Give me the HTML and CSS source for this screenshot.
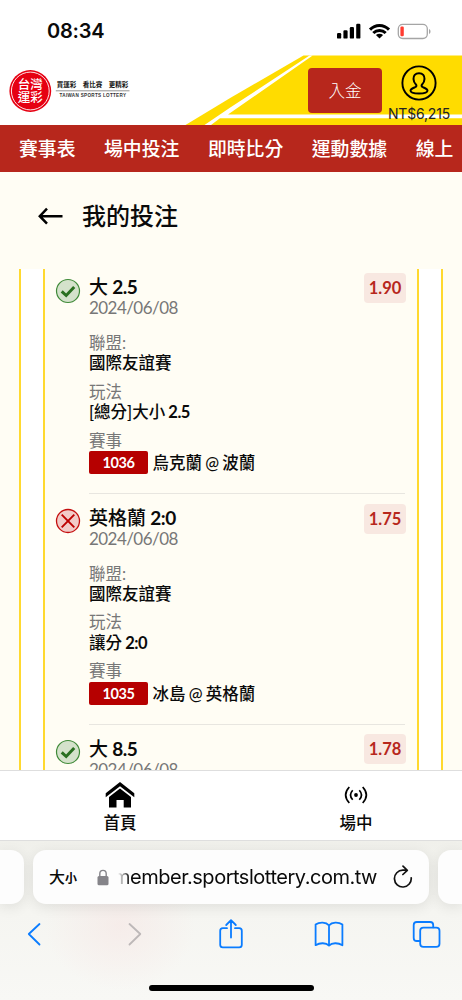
FILE: index.html
```html
<!DOCTYPE html>
<html lang="zh-Hant">
<head>
<meta charset="utf-8">
<meta name="viewport" content="width=device-width, initial-scale=1">
<title>我的投注</title>
<link rel="stylesheet" href="styles.css">
</head>
<body>
<div class="phone">
  <div class="status">
    <span class="time">08:34</span>
    <svg class="status-icons" width="96" height="20" viewBox="0 0 96 20">
      <g fill="#000">
        <rect x="0" y="11" width="4.2" height="5.6" rx="1.2"/>
        <rect x="6.4" y="8.2" width="4.2" height="8.4" rx="1.2"/>
        <rect x="12.8" y="5" width="4.2" height="11.6" rx="1.2"/>
        <rect x="19.2" y="1.8" width="4.2" height="14.8" rx="1.2"/>
      </g>
      <g fill="none" stroke="#000" stroke-width="3">
        <path d="M33 7.6C38.300 2 46.700 2 52 7.600"/>
        <path d="M36.300 11C39.800 7.500 45.200 7.500 48.700 11"/>
      </g>
      <path d="M42.500 16.600L38.900 13C41 11.300 44 11.300 46.100 13Z" fill="#000"/>
      <rect x="61.300" y="2.300" width="29" height="14.200" rx="4.400" fill="#fff" stroke="#a5a5a5" stroke-width="1.300"/>
      <rect x="63.400" y="4.500" width="3.400" height="9.800" rx="1.200" fill="#ff3b30"/>
      <path d="M92 7v5c2-.7 2-4.300 0-5z" fill="#a5a5a5"/>
    </svg>
  </div>

  <header class="header">
    <svg class="swoosh" width="462" height="70" viewBox="0 0 462 70">
      <path d="M303.500 .6H462V70H185.500L231 42.500Z" fill="#ffdc00"/>
      <path d="M309.500 .6H312.700L228 59.600H462V63.200H220L211 70H204.500L231 52Z" fill="#fff"/>
    </svg>
    <svg class="logo" width="122" height="44" viewBox="0 0 122 44">
      <circle cx="21.300" cy="22" r="20.900" fill="#e60012"/>
      <circle cx="21.300" cy="22" r="18.900" fill="none" stroke="#fff" stroke-width=".9"/>
      <g class="seal-text">
        <text x="8.800" y="20.300" textLength="25">台灣</text>
        <text x="8.800" y="32.900" textLength="25">運彩</text>
      </g>
      <g class="logo-slogan">
        <text x="47.800" y="18.400" textLength="19.500">買運彩</text>
        <text x="73.800" y="18.400" textLength="19.500">看比賽</text>
        <text x="99.800" y="18.400" textLength="19.500">更精彩</text>
      </g>
      <path d="M46.800 21.800H120.500" stroke="#777" stroke-width=".8"/>
      <text class="logo-en" x="50.500" y="28.400" textLength="66.500">TAIWAN SPORTS LOTTERY</text>
    </svg>
    <div class="deposit">入金</div>
    <div class="account">
      <svg width="36" height="36" viewBox="0 0 36 36" fill="none" stroke="#000">
        <circle cx="18" cy="18" r="16.600" stroke-width="1.900"/>
        <path d="M18 8.200C14.200 8.200 12.300 10.800 12.500 14C12.600 16.500 13.600 18.200 14.900 19.500C15.900 20.700 15.400 21.600 14 22.200C11.300 23.200 9.500 24.200 9.500 25.800C9.600 27.900 13.500 28.500 18 28.500S26.400 27.900 26.500 25.800C26.500 24.200 24.700 23.200 22 22.200C20.600 21.600 20.100 20.700 21.100 19.500C22.400 18.200 23.400 16.500 23.500 14C23.700 10.800 21.800 8.200 18 8.200Z" stroke-width="2"/>
      </svg>
      <span class="balance">NT$6,215</span>
    </div>
  </header>

  <nav class="nav"><span>賽事表</span><span>場中投注</span><span>即時比分</span><span>運動數據</span><span>線上</span></nav>

  <div class="page-title">
    <svg width="26" height="18" viewBox="0 0 26 18" fill="none" stroke="#000" stroke-width="2.500"><path d="M25.500 9.200H2.500M10 1.700L2.800 9.200L10 16.700"/></svg>
    <h1>我的投注</h1>
  </div>

  <main class="bets">
    <div class="ticket">
      <article class="bet">
        <svg class="mark" width="26" height="26" viewBox="0 0 26 26"><circle cx="13" cy="13" r="11.500" fill="#d4e2cb" stroke="#3f8a38" stroke-width="1.200"/><path d="M6.700 13.300L11.200 17.500L19.200 9" fill="none" stroke="#2a7021" stroke-width="3"/></svg>
        <div class="info">
          <h2>大 <b>2.5</b></h2><div class="date">2024/06/08</div>
          <dl><dt>聯盟:</dt><dd>國際友誼賽</dd></dl>
          <dl><dt>玩法</dt><dd>[總分]大小 <b>2.5</b></dd></dl>
          <dl><dt>賽事</dt><dd class="match"><span class="code">1036</span><span class="teams">烏克蘭 @ 波蘭</span></dd></dl>
        </div>
        <span class="odds">1.90</span>
      </article>
      <article class="bet">
        <svg class="mark" width="26" height="26" viewBox="0 0 26 26"><circle cx="13" cy="13" r="11.500" fill="#f2cbc8" stroke="#c40d0d" stroke-width="1.300"/><path d="M6.700 6.700L19.300 19.300M19.300 6.700L6.700 19.300" stroke="#bd0000" stroke-width="1.900"/></svg>
        <div class="info">
          <h2>英格蘭 <b>2:0</b></h2><div class="date">2024/06/08</div>
          <dl><dt>聯盟:</dt><dd>國際友誼賽</dd></dl>
          <dl><dt>玩法</dt><dd>讓分 <b>2:0</b></dd></dl>
          <dl><dt>賽事</dt><dd class="match"><span class="code">1035</span><span class="teams">冰島 @ 英格蘭</span></dd></dl>
        </div>
        <span class="odds">1.75</span>
      </article>
      <article class="bet">
        <svg class="mark" width="26" height="26" viewBox="0 0 26 26"><circle cx="13" cy="13" r="11.500" fill="#d4e2cb" stroke="#3f8a38" stroke-width="1.200"/><path d="M6.700 13.300L11.200 17.500L19.200 9" fill="none" stroke="#2a7021" stroke-width="3"/></svg>
        <div class="info">
          <h2>大 <b>8.5</b></h2><div class="date">2024/06/08</div>
        </div>
        <span class="odds">1.78</span>
      </article>
    </div>
  </main>

  <div class="tabs">
    <div class="tab">
      <svg width="30" height="28" viewBox="0 0 30 28"><path d="M15 .9L29.300 12.200V16.200L15 5.300L.7 16.200V12.200Z"/><path d="M15 7.600L26 16V26.600H18.700V19H11.500V26.600H4V16Z"/></svg>
      <span>首頁</span>
    </div>
    <div class="tab">
      <svg width="24" height="28" viewBox="0 0 24 28" fill="none" stroke="#000" stroke-width="1.700"><circle cx="12" cy="14" r="1.900" fill="#000" stroke="none"/><path d="M8.700 9.200Q4.300 14 8.700 18.800M15.300 9.200Q19.700 14 15.300 18.800M5.300 6Q-2 14 5.300 22M18.700 6Q26 14 18.700 22"/></svg>
      <span>場中</span>
    </div>
  </div>

  <footer class="browser">
    <div class="address-row">
      <div class="peek peek-left"></div>
      <div class="address">
        <span class="aa">大<small>小</small></span>
        <svg class="lock" width="12" height="17" viewBox="0 0 12 17"><rect x=".5" y="7" width="11" height="9.300" rx="1.500" fill="#858489"/><path d="M2.800 7.500V4.700C2.800.2 9.200.2 9.200 4.700V7.500" fill="none" stroke="#858489" stroke-width="1.400"/></svg>
        <span class="url"><span>member.sportslottery.com.tw</span></span>
        <svg class="reload" width="20" height="24" viewBox="0 0 20 24" fill="none" stroke="#111" stroke-width="1.700" stroke-linecap="round" stroke-linejoin="round"><path d="M18.200 12.800A8.400 8.400 0 1 1 9.800 5.200H14M10 1.200L14.300 5.300L9.900 9.500"/></svg>
      </div>
      <div class="peek peek-right"></div>
    </div>
    <div class="toolbar">
      <svg width="30" height="32" viewBox="0 0 30 32"><path d="M18.500 6L7.800 16L18.500 26.500"/></svg>
      <svg class="disabled" width="30" height="32" viewBox="0 0 30 32"><path d="M10.500 6L21.300 16L10.500 26.500"/></svg>
      <svg width="30" height="32" viewBox="0 0 30 32"><path d="M11 10.200H6.800Q4.200 10.200 4.200 12.800V26.800Q4.200 29.400 6.800 29.400H23.200Q25.800 29.400 25.800 26.800V12.800Q25.800 10.200 23.200 10.200H19M15 19.500V2.400M10.200 7L15 2.200L19.800 7"/></svg>
      <svg width="30" height="32" viewBox="0 0 30 32"><path d="M15 7.300C12 4 5.600 3.700 1.600 6.600V27.200C6 24.500 12 24.600 15 27.600C18 24.600 24 24.500 28.400 27.200V6.600C24.400 3.700 18 4 15 7.300V27.400"/></svg>
      <svg width="30" height="32" viewBox="0 0 30 32"><rect x="9.200" y="9.600" width="19.300" height="19.300" rx="3.200"/><path d="M8.800 23H5.800Q2.700 23 2.700 19.900V7.100Q2.700 4 5.800 4H19.100Q22.200 4 22.200 7.100V9.300"/></svg>
    </div>
    <div class="home-bar"></div>
  </footer>
</div>
</body>
</html>
```
FILE: styles.css
```css
* { box-sizing: border-box; }
body { margin: 0; background: #fff; color: #0a0a0a; font-family: Lato, "Noto Sans CJK TC", sans-serif; }
svg { display: block; flex: none; }
h1, h2, dl, dd { margin: 0; }

.phone { width: 462px; height: 1000px; display: flex; flex-direction: column; overflow: hidden; }

.status { height: 55px; flex: none; display: flex; justify-content: space-between; padding: 19px 29px 0 47px; }
.time { font: 600 20px/24px Inter, sans-serif; letter-spacing: -.2px; }
.status-icons { margin-top: 3px; }

.header { position: relative; height: 70px; flex: none; display: flex; align-items: flex-start; }
.swoosh { position: absolute; inset: 0; }
.logo { position: relative; margin: 14px 0 0 9px; }
.seal-text { fill: #fff; font: 500 12.5px "Noto Sans CJK TC", sans-serif; }
.logo-slogan { fill: #111; font: 700 6.5px "Noto Sans CJK TC", sans-serif; }
.logo-en { fill: #333; font: 700 4.6px "Liberation Sans", sans-serif; }
.deposit { position: relative; width: 74px; height: 45px; margin: 13px 0 0 177px; border-radius: 4px; background: #b7271c; color: #fff; font: 300 16.5px/44px "Noto Sans CJK TC", sans-serif; text-align: center; }
.account { position: relative; width: 72px; margin: 9.5px 0 0 1px; display: flex; flex-direction: column; align-items: center; }
.balance { margin-top: 4px; font: 400 14px/18px Inter, sans-serif; letter-spacing: -.2px; color: #222; }

.nav { height: 47px; flex: none; display: flex; gap: 28.500px; padding-left: 19px; background: #b7271c; color: #fff; font: 500 18.850px/46px "Noto Sans CJK TC", sans-serif; white-space: nowrap; }

.page-title { height: 97px; flex: none; display: flex; align-items: flex-start; gap: 19px; padding: 25px 0 0 37px; background: #fffdf4; }
.page-title svg { margin-top: 10px; }
.page-title h1 { font: 500 24px/36px "Noto Sans CJK TC", sans-serif; }

.bets { height: 501px; flex: none; display: flex; justify-content: center; background: #fffdf4; }
.ticket { width: 424px; height: 501px; overflow: hidden; padding: 0 22px; border: solid #ffd92f; border-width: 0 2px; background: #fff; }
.bet { position: relative; display: flex; height: 230.700px; padding: 13px 12px 0 10px; border: solid #ffd92f; border-width: 0 2px; background: #fffdf4; }
.bet:first-child { margin-top: -5.700px; }
.mark { margin: 1.200px 7.500px 0 -.5px; }
.info { flex: 1; margin-left: 1px; border-bottom: 1.500px solid #e8e6e0; }
.info h2 { font-weight: 500; font-size: 19px; line-height: 22px; word-spacing: .5px; }
.info b { font-weight: 700; letter-spacing: -.5px; margin-left: -1px; }
.date { color: #777; font-size: 17px; line-height: 19px; margin-bottom: 15.500px; letter-spacing: -.55px; }
dl { margin-bottom: 8.300px; font-size: 16.500px; line-height: 20.300px; }
dt { color: #777; }
dd { color: #0a0a0a; font-weight: 500; }
.match { display: flex; align-items: center; gap: 4.500px; white-space: nowrap; height: 23px; }
.teams { word-spacing: -.9px; padding-top: 2px; }
.code { width: 59px; height: 23px; border-radius: 2px; background: #b60000; color: #fff; font-weight: 700; font-size: 14.500px; line-height: 23px; text-align: center; letter-spacing: -.4px; }
.odds { position: absolute; right: 11px; top: 9.700px; width: 42px; height: 30px; border-radius: 4px; background: #f8e8e1; color: #b7271c; font-weight: 700; font-size: 16.500px; line-height: 30px; text-align: center; }

.tabs { height: 71px; flex: none; display: flex; border-top: 1px solid #dedede; border-bottom: 1px solid #dedede; padding-left: 2px; background: #fff; }
.tab { flex: none; width: 236px; display: flex; flex-direction: column; align-items: center; padding-top: 10px; font: 500 16.500px/26px "Noto Sans CJK TC", sans-serif; }

.browser { flex: 1; display: flex; flex-direction: column; align-items: center; padding-top: 9px; background: radial-gradient(ellipse 75px 65px at 120px 84px, rgba(246,230,228,.6), rgba(246,230,228,0)), linear-gradient(#f0f0eb, #f5f5f1 45%, #f8f8f5); }
.address-row { width: 462px; height: 54px; display: flex; justify-content: space-between; }
.peek, .address { background: #fdfdfd; box-shadow: 0 3px 14px rgba(0,0,0,.09); }
.peek-left { width: 24px; border-radius: 0 13px 13px 0; }
.peek-right { width: 24px; border-radius: 13px 0 0 13px; }
.address { width: 396px; border-radius: 13px; display: flex; align-items: center; padding: 0 16px; }
.aa { width: 48px; font: 500 16px/24px "Noto Sans CJK TC", sans-serif; white-space: nowrap; }
.aa small { font-size: 12px; font-weight: 700; }
.url { width: 259px; margin-left: 9px; overflow: hidden; display: flex; justify-content: flex-end; font: 400 20px/28px Inter, sans-serif; letter-spacing: -.48px; white-space: nowrap; -webkit-mask-image: linear-gradient(90deg, transparent, #000 12px); mask-image: linear-gradient(90deg, transparent, #000 12px); }
.reload { margin-left: 16px; }
.toolbar { width: 462px; display: flex; justify-content: space-between; padding: 0 21px; margin-top: 13.500px; }
.toolbar svg { fill: none; stroke: #0a7cff; stroke-width: 1.800; stroke-linecap: round; stroke-linejoin: round; }
.toolbar .disabled { stroke: #bdb8b8; }
.home-bar { width: 165px; height: 6px; margin-top: 35.500px; border-radius: 3px; background: #000; }
```
